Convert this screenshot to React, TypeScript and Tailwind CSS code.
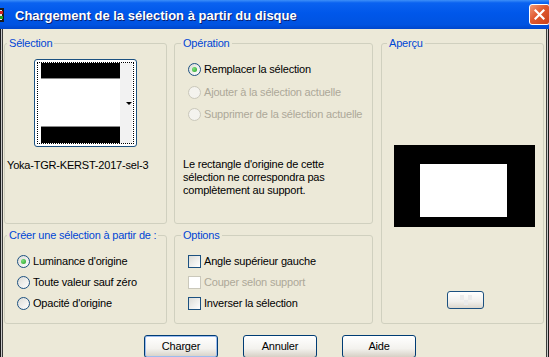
import { ReactNode } from "react";

type GroupProps = {
  label: string;
  labelPos: string;
  className: string;
  children: ReactNode;
};

const Group = ({ label, labelPos, className, children }: GroupProps) => (
  <div className={`relative rounded-[3px] border border-[#d0d0bf] ${className}`}>
    <span className={`absolute top-[-7px] ${labelPos} bg-[#ece9d8] px-[2px] leading-[13px] text-[#0046d5]`}>
      {label}
    </span>
    {children}
  </div>
);

const Radio = ({ checked, disabled }: { checked?: boolean; disabled?: boolean }) => (
  <span
    className={`flex h-[13px] w-[13px] shrink-0 items-center justify-center rounded-full border ${
      disabled
        ? "border-[#cac8bb] bg-[#f4f3ee]"
        : "border-[#1c5180] bg-[linear-gradient(135deg,#dcdcd7,#ffffff)]"
    }`}
  >
    {checked && <span className="h-[5px] w-[5px] rounded-full bg-[radial-gradient(circle_at_35%_35%,#7ee07e,#21a121)]" />}
  </span>
);

const Check = ({ disabled }: { disabled?: boolean }) => (
  <span
    className={`h-[13px] w-[13px] shrink-0 border ${
      disabled ? "border-[#cac8bb] bg-white" : "border-[#1c5180] bg-[linear-gradient(135deg,#dcdcd7,#ffffff)]"
    }`}
  />
);

const Row = ({ h, disabled, children }: { h: string; disabled?: boolean; children: ReactNode }) => (
  <div className={`flex ${h} items-center gap-[3px] ${disabled ? "text-[#aca899]" : "text-black"}`}>
    {children}
  </div>
);

const XpButton = ({ label, isDefault }: { label: string; isDefault?: boolean }) => (
  <div
    className={`flex h-[23px] w-[74px] shrink-0 items-center justify-center rounded-[3px] border border-[#003c74] bg-[linear-gradient(180deg,#ffffff,#f3f2ee_60%,#d6d0c5)] pb-[1px] ${
      isDefault ? "shadow-[inset_0_0_0_1px_#9cbcef]" : ""
    }`}
  >
    {label}
  </div>
);

export default function App() {
  return (
    <div className="flex h-[357px] w-[549px] flex-col overflow-hidden bg-[#ece9d8] font-['Liberation_Sans',Arial,sans-serif] text-[11px] tracking-[-0.2px] text-black">
      {/* Title bar */}
      <div className="flex h-[29px] shrink-0 items-center bg-[linear-gradient(180deg,#3d8ff8_0%,#0a62f0_10%,#0057ea_45%,#0053e1_85%,#0046cc_100%)]">
        <svg className="ml-[-11px] h-[16px] w-[16px] shrink-0" viewBox="0 0 16 16">
          <rect x="0" y="1" width="15" height="14" fill="#1b1b1b" />
          <rect x="2" y="3" width="11" height="10" fill="#e8e8e8" />
          <rect x="11" y="4" width="3" height="3" fill="#d02020" />
          <rect x="11" y="9" width="3" height="3" fill="#20a020" />
        </svg>
        <span className="ml-[10px] pt-[2px] text-[13px] font-bold leading-none tracking-normal text-white [text-shadow:1px_1px_0_#0a1e6e]">
          Chargement de la sélection à partir du disque
        </span>
        <div className="ml-auto mr-[-1px] flex h-[21px] w-[21px] shrink-0 items-center justify-center rounded-[3px] border border-white bg-[linear-gradient(135deg,#f29a78,#e0582e_45%,#c8401a)]">
          <svg width="11" height="11" viewBox="0 0 11 11">
            <path d="M1.5 1.5 L9.5 9.5 M9.5 1.5 L1.5 9.5" stroke="#fff" strokeWidth="2.2" strokeLinecap="square" />
          </svg>
        </div>
      </div>

      {/* Body with frame */}
      <div className="flex flex-1 flex-col px-[3px] pb-[4px] shadow-[inset_1px_0_0_#1a1a1a,inset_2px_0_0_#c8c8c8,inset_3px_0_0_#3a3a3a,inset_-1px_0_0_#1a1a1a,inset_-2px_0_0_#c8c8c8,inset_-3px_0_0_#3a3a3a,inset_0_-2px_0_#1a1a1a,inset_0_-3px_0_#cfcfcf,inset_0_-4px_0_#3a3a3a]">
        <div className="flex flex-1 flex-col overflow-hidden pl-[1px] pt-[14px]">
          <div className="flex">
            {/* Left column */}
            <div className="flex w-[163px] shrink-0 flex-col gap-[11px]">
              <Group label="Sélection" labelPos="left-[2px]" className="h-[181px]">
                <div className="relative mx-auto mt-[15px] h-[88px] w-[103px] rounded-[3px] border border-[#1c5180] bg-white">
                  <div className="absolute inset-[2px] border border-dotted border-black" />
                  <div className="relative flex pl-[6px] pt-[3px]">
                    <div className="flex w-[79px] flex-col">
                      <div className="h-[15px] bg-black" />
                      <div className="h-px bg-[#8a8a8a]" />
                      <div className="h-[47px] bg-white" />
                      <div className="h-px bg-[#8a8a8a]" />
                      <div className="h-[16px] bg-black" />
                    </div>
                    <div className="flex w-[12px] items-center justify-end bg-[#f2f2f2]">
                      <span className="h-0 w-0 border-x-[3px] border-t-[3px] border-x-transparent border-t-black" />
                    </div>
                  </div>
                </div>
                <div className="mt-[12px] pl-[2px] leading-[13px]">Yoka-TGR-KERST-2017-sel-3</div>
              </Group>

              <Group label="Créer une sélection à partir de :" labelPos="left-[2px]" className="h-[89px]">
                <div className="pl-[12px] pt-[15px]">
                  <Row h="h-[21px]">
                    <Radio checked />
                    <span>Luminance d'origine</span>
                  </Row>
                  <Row h="h-[21px]">
                    <Radio />
                    <span>Toute valeur sauf zéro</span>
                  </Row>
                  <Row h="h-[21px]">
                    <Radio />
                    <span>Opacité d'origine</span>
                  </Row>
                </div>
              </Group>
            </div>

            {/* Middle column */}
            <div className="ml-[7px] flex w-[199px] shrink-0 flex-col gap-[11px]">
              <Group label="Opération" labelPos="left-[6px]" className="h-[181px]">
                <div className="pl-[8px] pt-[14px]">
                  <div className="pl-[5px]">
                    <Row h="h-[23px]">
                      <Radio checked />
                      <span>Remplacer la sélection</span>
                    </Row>
                    <Row h="h-[22px]" disabled>
                      <Radio disabled />
                      <span>Ajouter à la sélection actuelle</span>
                    </Row>
                    <Row h="h-[22px]" disabled>
                      <Radio disabled />
                      <span>Supprimer de la sélection actuelle</span>
                    </Row>
                  </div>
                  <p className="mt-[33px] leading-[13px]">
                    Le rectangle d'origine de cette
                    <br />
                    sélection ne correspondra pas
                    <br />
                    complètement au support.
                  </p>
                </div>
              </Group>

              <Group label="Options" labelPos="left-[6px]" className="h-[89px]">
                <div className="pl-[13px] pt-[15px]">
                  <Row h="h-[21px]">
                    <Check />
                    <span>Angle supérieur gauche</span>
                  </Row>
                  <Row h="h-[21px]" disabled>
                    <Check disabled />
                    <span>Couper selon support</span>
                  </Row>
                  <Row h="h-[21px]">
                    <Check />
                    <span>Inverser la sélection</span>
                  </Row>
                </div>
              </Group>
            </div>

            {/* Right column */}
            <Group label="Aperçu" labelPos="left-[5px]" className="ml-[8px] h-[281px] w-[163px] shrink-0">
              <div className="ml-[12px] mt-[101px] h-[82px] w-[141px] bg-black pl-[26px] pt-[19px]">
                <div className="h-[53px] w-[87px] bg-white" />
              </div>
              <div className="ml-[65px] mt-[64px] flex h-[18px] w-[37px] items-center justify-center rounded-[3px] border border-[#1c5180] bg-[linear-gradient(180deg,#ffffff,#f1f0ec_60%,#dcd7cd)]">
                <svg width="12" height="10" viewBox="0 0 12 10">
                  <rect x="0" y="0" width="4" height="5" fill="#ebebeb" />
                  <rect x="8" y="0" width="4" height="5" fill="#ebebeb" />
                  <rect x="4" y="5" width="4" height="5" fill="#ebebeb" />
                </svg>
              </div>
            </Group>
          </div>

          {/* Buttons */}
          <div className="mt-[11px] flex gap-[25px] pl-[140px]">
            <XpButton label="Charger" isDefault />
            <XpButton label="Annuler" />
            <XpButton label="Aide" />
          </div>
        </div>
      </div>
    </div>
  );
}
